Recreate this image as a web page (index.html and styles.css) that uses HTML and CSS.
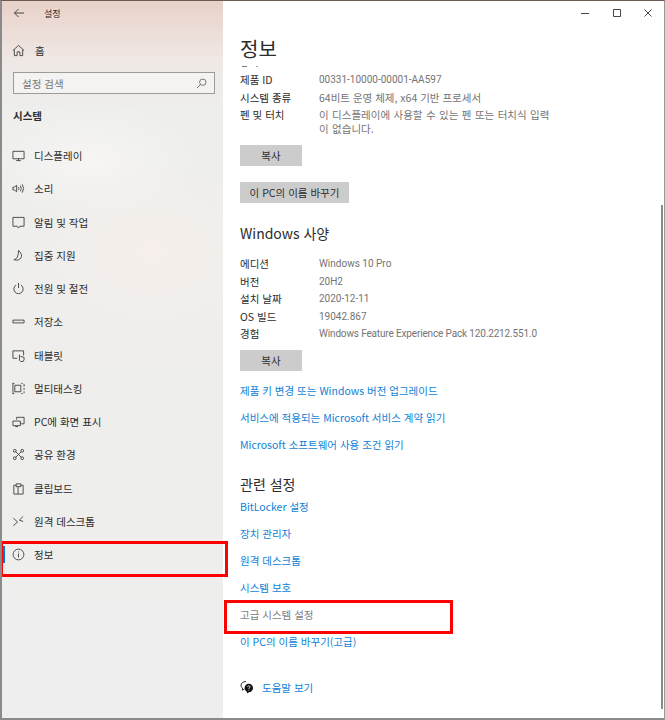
FILE: index.html
```html
<!DOCTYPE html>
<html lang="ko">
<head>
  <meta charset="UTF-8">
  <title>설정</title>
  <meta name="viewport" content="width=device-width, initial-scale=1.0">
  <link rel="stylesheet" href="styles.css">
</head>
<body>

<div class="window">
  <aside class="sidebar">
    <div class="titlebar">
      <svg class="back" width="12" height="12" viewBox="0 0 12 12"><path d="M1.5 6H11M5.5 2 1.5 6l4 4"/></svg>
      <span>설정</span>
    </div>
    <div class="home">
      <svg class="icon" viewBox="0 0 14 14"><path d="M1 7 7 1.5 13 7M2.5 6v6.5h3V8.500h3v4h3V6"/></svg>
      <span>홈</span>
    </div>
    <div class="search">
      <span>설정 검색</span>
      <svg width="11" height="11" viewBox="0 0 11 11"><circle cx="6.800" cy="4.200" r="3.200"/><path d="M4.500 6.500 1 10"/></svg>
    </div>
    <div class="side-heading">시스템</div>

    <nav class="nav">
      <div class="nav-item">
        <svg class="icon" viewBox="0 0 14 14"><path d="M1 2.500h12v8H1zM7 10.500v2M4.500 12.500h5"/></svg>
        <span>디스플레이</span>
      </div>
      <div class="nav-item">
        <svg class="icon" viewBox="0 0 14 14"><path d="M1 5.500h1.500L5 3.500v7l-2.500-2H1zM7 5.500q1 1.500 0 3M9 4q2 3 0 6M11 2.500q3 4.500 0 9"/></svg>
        <span>소리</span>
      </div>
      <div class="nav-item">
        <svg class="icon" viewBox="0 0 14 14"><path d="M1 1.500h12v9.500H8.500L7 13l-1.500-2H1z"/></svg>
        <span>알림 및 작업</span>
      </div>
      <div class="nav-item">
        <svg class="icon" viewBox="0 0 14 14"><path d="M7 1.500Q12 6 9.500 10 6.500 13.500 2 11.500 7 11 7 1.500z"/></svg>
        <span>집중 지원</span>
      </div>
      <div class="nav-item">
        <svg class="icon" viewBox="0 0 14 14"><path d="M4.500 3.200a5 5 0 1 0 5 0M7 1v5.500"/></svg>
        <span>전원 및 절전</span>
      </div>
      <div class="nav-item">
        <svg class="icon" viewBox="0 0 14 14"><path d="M1 5.500h12v3H1z"/></svg>
        <span>저장소</span>
      </div>
      <div class="nav-item">
        <svg class="icon" viewBox="0 0 14 14"><path d="M5.500 10H1V2h11.500v5M8 6v6l1.500 1.500H12l1-2V9L9 8"/></svg>
        <span>태블릿</span>
      </div>
      <div class="nav-item">
        <svg class="icon" viewBox="0 0 14 14"><path d="M3 3.500h6.500v7H3zM1 1v12M1 1.500h1.500M1 12.500h1.500M10 1.500h1.500M10 12.500h1.500M13 2v3M13 6.500v2M13 10v2"/></svg>
        <span>멀티태스킹</span>
      </div>
      <div class="nav-item">
        <svg class="icon" viewBox="0 0 14 14"><path d="M5 5V2.500h8v7H9M1 6.500h8v5H1zM3.500 12.500h3"/></svg>
        <span>PC에 화면 표시</span>
      </div>
      <div class="nav-item">
        <svg class="icon" viewBox="0 0 14 14"><path d="M4 4l6 6M10 4l-6 6"/><circle cx="3" cy="3" r="1.500"/><circle cx="11" cy="3" r="1.500"/><circle cx="3" cy="11" r="1.500"/><circle cx="11" cy="11" r="1.500"/></svg>
        <span>공유 환경</span>
      </div>
      <div class="nav-item">
        <svg class="icon" viewBox="0 0 14 14"><path d="M4.500 3.500H2v9.500h10V3.500H9.500M4.500 2h5v3h-5zM6.500 5v8"/></svg>
        <span>클립보드</span>
      </div>
      <div class="nav-item">
        <svg class="icon" viewBox="0 0 14 14"><path d="M1.500 3.500 6 7.500l-4.500 4M12 1.500 8 5.500l4 1.500"/></svg>
        <span>원격 데스크톱</span>
      </div>
      <div class="nav-item active">
        <svg class="icon" viewBox="0 0 14 14"><circle cx="7" cy="7" r="5.800"/><path d="M7 6v4.200M7 3.800v1"/></svg>
        <span>정보</span>
      </div>
    </nav>
  </aside>

  <main class="content">
    <div class="winbtns">
      <svg width="10" height="10" viewBox="0 0 10 10"><path d="M1 5.500h8"/></svg>
      <svg width="10" height="10" viewBox="0 0 10 10"><path d="M1.500 1.500h7v7h-7z"/></svg>
      <svg width="10" height="10" viewBox="0 0 10 10"><path d="M1.500 1.500l7 7M8.500 1.500l-7 7"/></svg>
    </div>
    <h1>정보</h1>
    <div class="clipped"><i class="dash"></i><i class="dash short"></i></div>

    <div class="spec">
      <div class="spec-row"><div class="spec-key">제품 ID</div><div class="latin">00331-10000-00001-AA597</div></div>
      <div class="spec-row"><div class="spec-key">시스템 종류</div><div>64비트 운영 체제, x64 기반 프로세서</div></div>
      <div class="spec-row"><div class="spec-key">펜 및 터치</div><div class="wrapped">이 디스플레이에 사용할 수 있는 펜 또는 터치식 입력<br>이 없습니다.</div></div>
    </div>
    <div class="btn btn-copy first-copy">복사</div>
    <div class="btn btn-rename">이 PC의 이름 바꾸기</div>

    <h2 class="win-spec">Windows 사양</h2>
    <div class="spec spec-win">
      <div class="spec-row"><div class="spec-key">에디션</div><div class="latin">Windows 10 Pro</div></div>
      <div class="spec-row"><div class="spec-key">버전</div><div class="latin">20H2</div></div>
      <div class="spec-row"><div class="spec-key">설치 날짜</div><div class="latin">2020-12-11</div></div>
      <div class="spec-row"><div class="spec-key">OS 빌드</div><div class="latin">19042.867</div></div>
      <div class="spec-row"><div class="spec-key">경험</div><div class="latin tight">Windows Feature Experience Pack 120.2212.551.0</div></div>
    </div>
    <div class="btn btn-copy second-copy">복사</div>

    <div class="links links-top">
      <a>제품 키 변경 또는 Windows 버전 업그레이드</a>
      <a>서비스에 적용되는 Microsoft 서비스 계약 읽기</a>
      <a>Microsoft 소프트웨어 사용 조건 읽기</a>
    </div>

    <h2 class="related">관련 설정</h2>
    <div class="links links-related">
      <a>BitLocker 설정</a>
      <a>장치 관리자</a>
      <a>원격 데스크톱</a>
      <a>시스템 보호</a>
      <a class="disabled">고급 시스템 설정</a>
      <a>이 PC의 이름 바꾸기(고급)</a>
    </div>

    <div class="help">
      <svg width="14" height="14" viewBox="0 0 14 14"><path class="bubble" d="M6 1.500C3 1.500 1 3.200 1 5.300c0 1.200.6 2.200 1.500 2.900v2l2-1.300"/><circle class="bubble-fill" cx="8.800" cy="8" r="4.200"/><path class="bubble-fill" d="M7 11.500v2l2.500-1.700z"/><path class="bubble-mark" d="M7.500 6.800c.2-1.300 2.600-1.300 2.600.1 0 1-1.300 1-1.300 2M8.800 9.700v.8"/></svg>
      <a>도움말 보기</a>
    </div>
  </main>

  <div class="scrollbar"></div>
  <div class="mark mark-nav"></div>
  <div class="mark mark-link"></div>
</div>

</body>
</html>
```

FILE: styles.css
```css
* { box-sizing: border-box; margin: 0; padding: 0; }
body {
  font-family: "Noto Sans CJK KR", "Noto Sans", sans-serif;
  background: #fff;
  overflow: hidden;
}
svg { fill: none; stroke: #333; stroke-width: 0.9; flex: none; }

.window {
  position: relative;
  display: flex;
  width: 665px;
  height: 720px;
  border-top: 1px solid #6e5a52;
  border-left: 2px solid #8a8a8a;
  border-bottom: 2px solid #8a8a8a;
  border-right: 1px solid #9a9a9a;
  overflow: hidden;
}

/* left column */
.sidebar {
  width: 221px;
  flex: none;
  color: #2c2c2c;
  font-size: 10.500px;
  background:
    radial-gradient(ellipse 130px 90px at 150px 250px, #f6efeb, rgba(246, 239, 235, 0)),
    radial-gradient(ellipse 110px 60px at 90px 160px, #f6f5f3, rgba(246, 245, 243, 0)),
    linear-gradient(180deg, #e8d2ca 0, #ecdcd6 28px, #efe9e6 62px, #eeeeec 110px, #efeeec 300px, #eeeeee 720px);
}
.titlebar {
  display: flex;
  align-items: center;
  height: 24px;
  padding-left: 11px;
  font-size: 9px;
}
.back { margin-right: 19px; }
.home {
  display: flex;
  align-items: center;
  gap: 10px;
  height: 20px;
  margin-top: 15px;
  padding-left: 10px;
}
.icon { width: 13px; height: 13px; }
.search {
  display: flex;
  align-items: center;
  justify-content: space-between;
  height: 22px;
  margin: 12px 8px 0 11px;
  padding: 0 7px 0 8px;
  border: 1.500px solid #9b9b99;
  background: #f4f3f2;
  color: #777;
}
.search svg { stroke: #666; }
.side-heading {
  margin: 14px 0 0 11px;
  height: 16px;
  line-height: 16px;
  font-weight: 700;
  font-size: 10.500px;
}
.nav { margin-top: 15px; }
.nav-item {
  display: flex;
  align-items: center;
  gap: 9px;
  height: 33.250px;
  padding-left: 10px;
  position: relative;
}
.nav-item.active::before {
  content: "";
  position: absolute;
  left: 1px;
  top: 8px;
  width: 2px;
  height: 17px;
  background: #0078d7;
}

/* right column */
.content {
  flex: 1;
  padding-left: 17px;
  font-size: 10.500px;
  color: #2c2c2c;
  background: #fff;
}
.winbtns {
  display: flex;
  justify-content: flex-end;
  gap: 21.500px;
  height: 24px;
  align-items: center;
  padding-right: 11px;
}
h1 {
  font-weight: 400;
  font-size: 20px;
  line-height: 28px;
  margin-top: 10px;
}
/* what's left of the row scrolled away under the title */
.clipped {
  display: flex;
  gap: 9px;
  height: 8px;
  padding: 3px 0 0 2px;
}
.dash { width: 5px; height: 1px; background: #777; }
.dash.short { width: 2px; background: #aaa; }
.spec { color: #747474; line-height: 17.500px; }
.spec-row { display: flex; }
.spec-key { width: 79px; color: #2c2c2c; flex: none; }
.latin { font-family: Roboto, sans-serif; font-size: 10px; }
.tight { letter-spacing: -0.150px; }
.wrapped { line-height: 13.500px; margin-top: 2px; word-spacing: 0.500px; }
.btn {
  display: flex;
  align-items: center;
  justify-content: center;
  height: 21px;
  background: #ccc;
  color: #2c2c2c;
}
.btn-copy { width: 62px; }
.first-copy { margin-top: 10px; }
.btn-rename { width: 109px; margin-top: 16px; }
h2 {
  font-weight: 400;
  font-size: 14px;
  line-height: 20px;
}
.win-spec { margin-top: 20px; }
.spec-win { margin-top: 12px; }
.second-copy { margin-top: 7px; }
.links { display: flex; flex-direction: column; }
.links a { color: #0f7fd6; height: 27px; line-height: 16px; }
.links-top { margin-top: 12px; }
.related { margin-top: 10px; }
.links-related { margin-top: 5px; }
.links .disabled { color: #7d7d7d; }
.help {
  display: flex;
  align-items: center;
  gap: 8px;
  margin-top: 19px;
  color: #0f7fd6;
}
.help .bubble { stroke: #111; }
.help .bubble-fill { fill: #111; stroke: none; }
.help .bubble-mark { stroke: #fff; stroke-width: 0.8; }

.scrollbar {
  position: absolute;
  right: 1px;
  top: 204px;
  width: 2px;
  height: 504px;
  background: #8a8a8a;
}
.mark {
  position: absolute;
  border: 3px solid #f00;
}
.mark-nav { left: -2px; top: 540px; width: 228px; height: 36px; }
.mark-link { left: 222px; top: 599px; width: 229px; height: 34px; }
```
